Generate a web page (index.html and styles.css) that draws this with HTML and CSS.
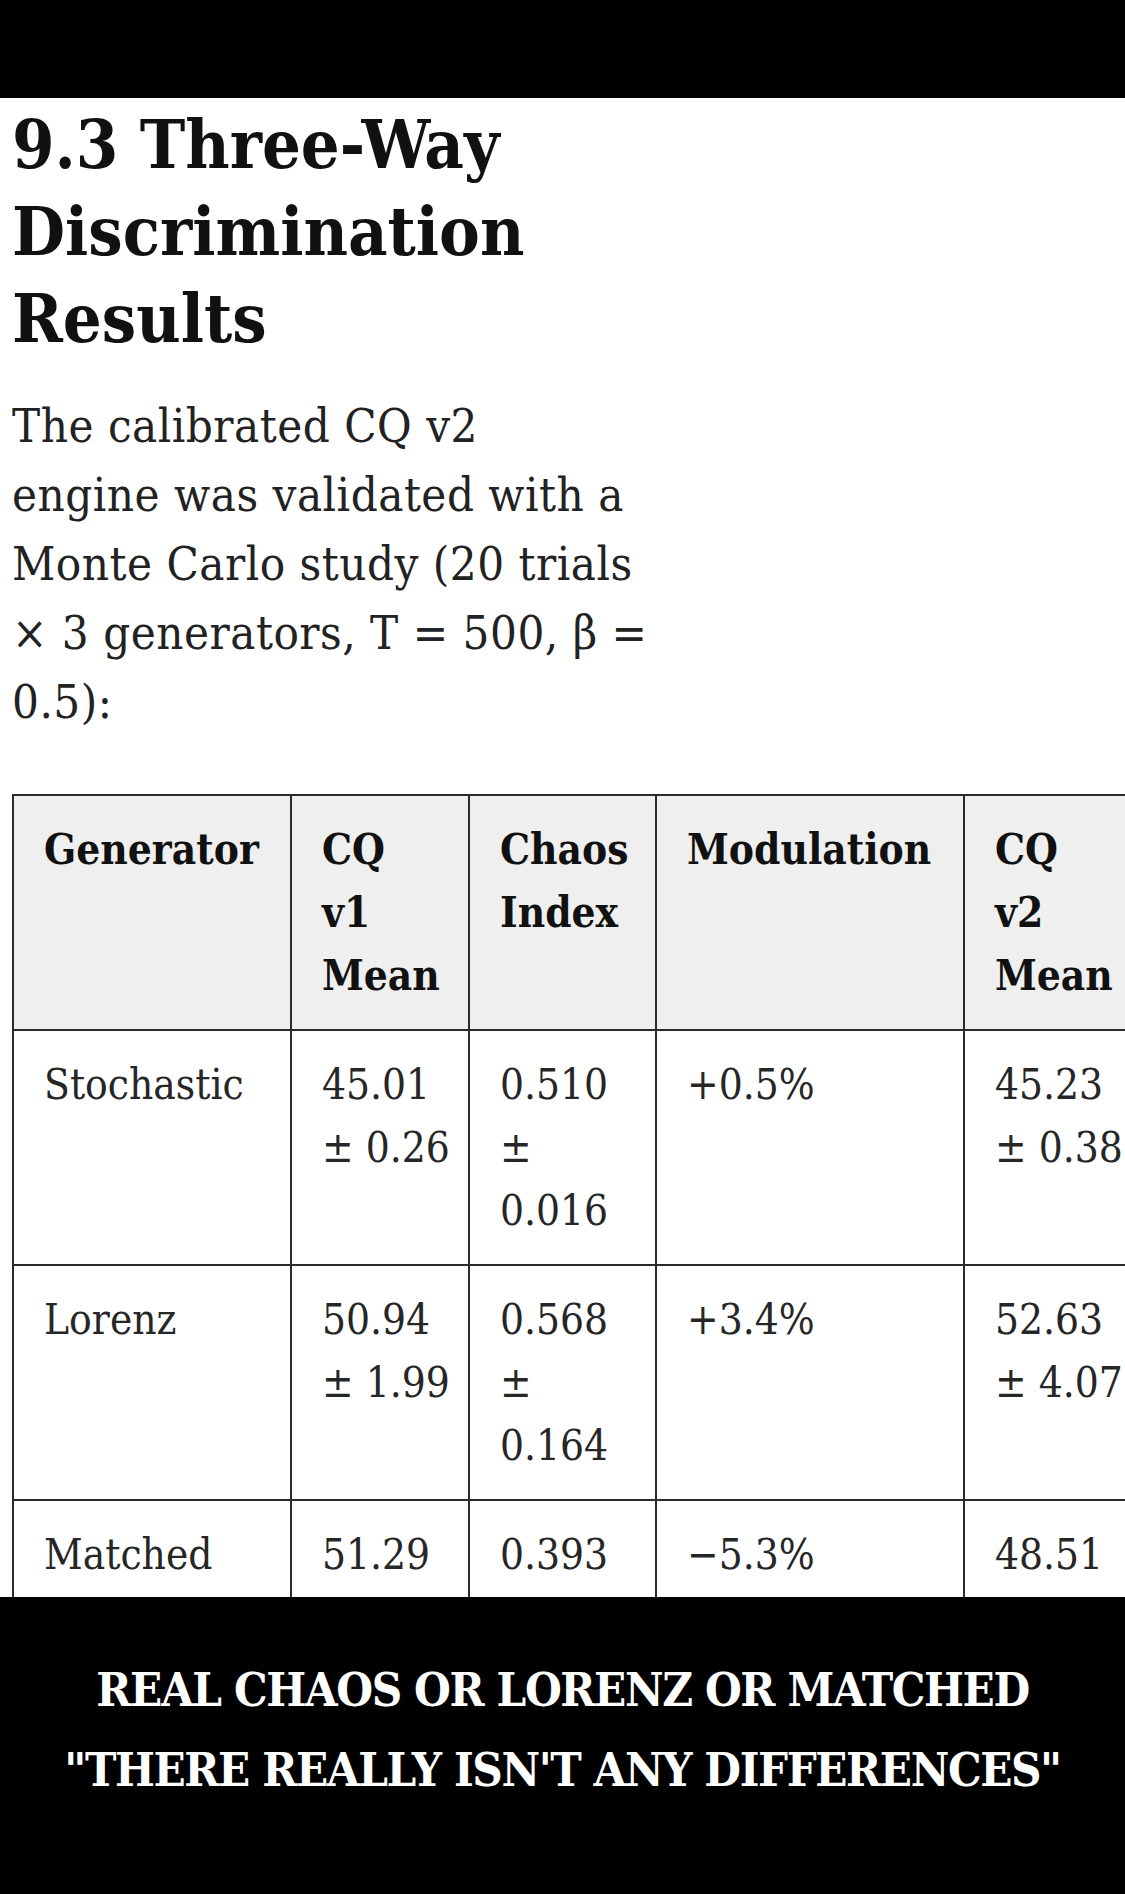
FILE: index.html
```html
<!DOCTYPE html>
<html lang="en">
<head>
<meta charset="utf-8">
<title>9.3 Three-Way Discrimination Results</title>
<link rel="stylesheet" href="styles.css">
</head>
<body>
<div class="screen">
  <div class="topbar"></div>
  <main class="content">
    <h2 class="title">9.3 Three-Way<br>Discrimination<br>Results</h2>
    <p class="lead">The calibrated CQ v2<br>engine was validated with a<br>Monte Carlo study (20 trials<br>× 3 generators, T = 500, β =<br>0.5):</p>
    <div class="table-wrap">
      <table class="results">
        <colgroup>
          <col class="c1"><col class="c2"><col class="c3"><col class="c4"><col class="c5">
        </colgroup>
        <thead>
          <tr>
            <th>Generator</th>
            <th>CQ<br>v1<br>Mean</th>
            <th>Chaos<br>Index</th>
            <th>Modulation</th>
            <th>CQ<br>v2<br>Mean</th>
          </tr>
        </thead>
        <tbody>
          <tr>
            <td>Stochastic</td>
            <td>45.01<br>± 0.26</td>
            <td>0.510<br>±<br>0.016</td>
            <td>+0.5%</td>
            <td>45.23<br>± 0.38</td>
          </tr>
          <tr>
            <td>Lorenz</td>
            <td>50.94<br>± 1.99</td>
            <td>0.568<br>±<br>0.164</td>
            <td>+3.4%</td>
            <td>52.63<br>± 4.07</td>
          </tr>
          <tr>
            <td>Matched</td>
            <td>51.29</td>
            <td>0.393</td>
            <td>−5.3%</td>
            <td>48.51</td>
          </tr>
        </tbody>
      </table>
    </div>
  </main>
  <div class="caption">
    <p class="caption-line">REAL CHAOS OR LORENZ OR MATCHED</p>
    <p class="caption-line">"THERE REALLY ISN'T ANY DIFFERENCES"</p>
  </div>
</div>
</body>
</html>
```

FILE: styles.css
```css
html, body {
  margin: 0;
  padding: 0;
  background: #000;
}

.screen {
  width: 1125px;
  height: 1894px;
  display: flex;
  flex-direction: column;
  overflow: hidden;
  background: #fff;
  font-family: "DejaVu Serif Condensed", "DejaVu Serif", serif;
  font-stretch: condensed;
}

.topbar {
  flex: none;
  height: 98px;
  background: #000;
}

.content {
  flex: 1;
  min-height: 0;
  overflow: hidden;
  padding: 3px 0 0 12px;
  background: #fff;
}

.title {
  margin: 0;
  font-size: 68px;
  line-height: 87px;
  font-weight: bold;
  color: #111;
  white-space: nowrap;
}

.lead {
  margin: 29px 0 0;
  font-size: 47px;
  line-height: 69px;
  letter-spacing: 0.5px;
  color: #222;
  white-space: nowrap;
}

.table-wrap {
  margin-top: 58px;
}

.results {
  border-collapse: collapse;
  table-layout: fixed;
  width: 1230px;
  font-size: 42px;
  line-height: 63px;
  color: #262626;
}

.results .c1 { width: 278px; }
.results .c2 { width: 178px; }
.results .c3 { width: 187px; }
.results .c4 { width: 308px; }
.results .c5 { width: 279px; }

.results th,
.results td {
  border: 2px solid #2b2b2b;
  padding: 22px 20px 22px 30px;
  text-align: left;
  vertical-align: top;
  white-space: nowrap;
}

.results th {
  background: #efefef;
  font-weight: bold;
  color: #111;
}

.caption {
  flex: none;
  height: 297px;
  box-sizing: border-box;
  padding-top: 53px;
  background: #000;
  color: #fff;
  text-align: center;
  font-size: 47px;
  line-height: 80px;
  letter-spacing: -1.4px;
  font-weight: bold;
}

.caption-line {
  margin: 0;
  white-space: nowrap;
}
```
